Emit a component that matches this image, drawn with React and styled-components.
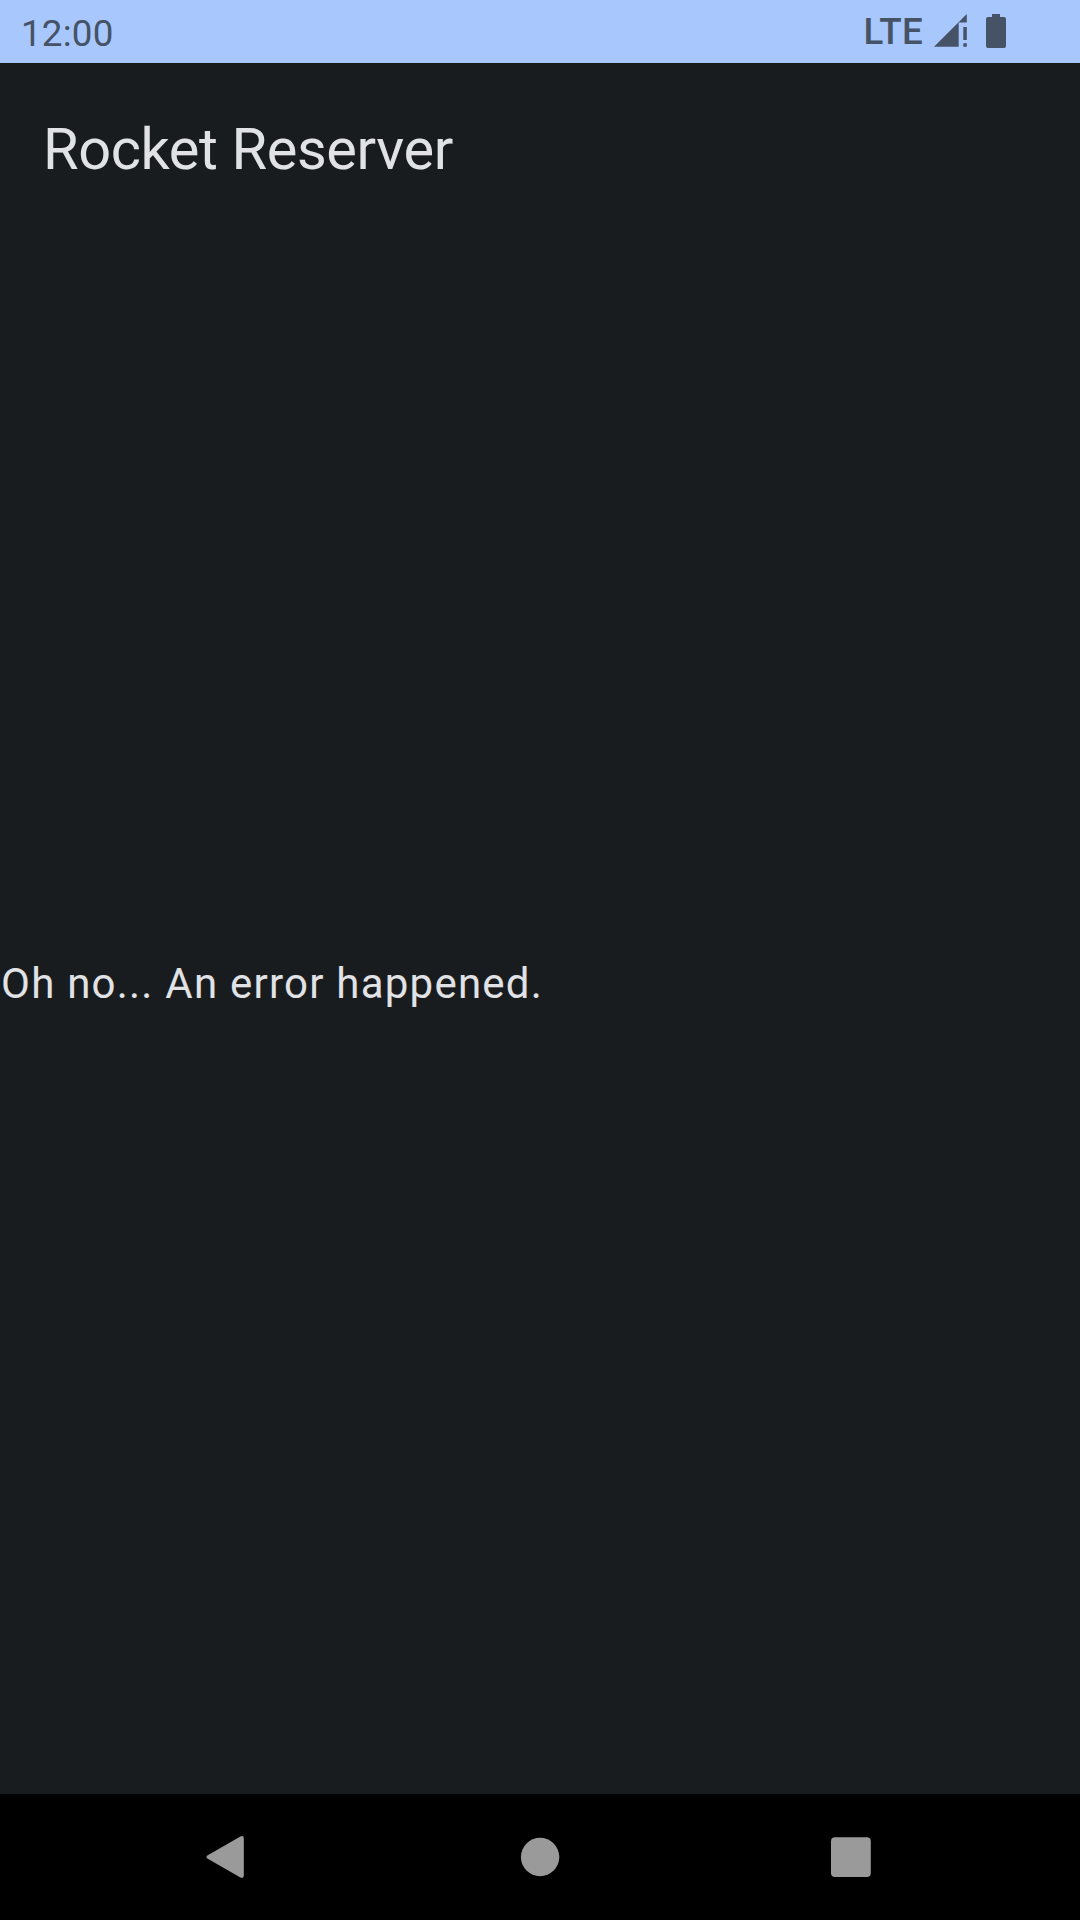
import React from "react";
import styled, { createGlobalStyle } from "styled-components";

const GlobalStyle = createGlobalStyle`
  body {
    margin: 0;
    background: #191c1e;
    font-family: Roboto, "Noto Sans", sans-serif;
  }
`;

const Screen = styled.div`
  display: flex;
  flex-direction: column;
  width: 1080px;
  height: 1920px;
  overflow: hidden;
  background: #191c1e;
  color: #e1e2e5;
`;

const StatusBar = styled.header`
  display: flex;
  align-items: flex-start;
  justify-content: space-between;
  box-sizing: border-box;
  height: 63px;
  flex: none;
  padding: 0 74px 0 21px;
  background: #a8c7fd;
  color: #465367;
`;

const Clock = styled.span`
  padding-top: 12px;
  font-size: 36.75px;
  line-height: 43px;
  letter-spacing: 0.2px;
`;

const StatusIcons = styled.div`
  display: flex;
  align-items: flex-start;
`;

const NetworkType = styled.span`
  margin-right: 11px;
  padding-top: 10px;
  font-size: 36.75px;
  font-weight: 500;
  line-height: 43px;
  letter-spacing: 0.3px;
`;

const StatusGlyph = styled.svg`
  display: block;
  width: ${(p) => p.$width}px;
  height: 36px;
  margin: 14px 0 0 ${(p) => p.$gap || 0}px;
  fill: currentColor;
`;

const TopAppBar = styled.div`
  display: flex;
  align-items: center;
  box-sizing: border-box;
  height: 168px;
  flex: none;
  padding: 4px 43px 0;
`;

const Title = styled.h1`
  margin: 0;
  font-size: 57.75px;
  font-weight: 400;
  line-height: 74px;
  letter-spacing: -0.4px;
`;

const Content = styled.main`
  display: flex;
  flex: 1;
  align-items: center;
  padding: 0 0 59px 1px;
`;

const Message = styled.p`
  margin: 0;
  font-size: 42px;
  line-height: 63px;
  letter-spacing: 1.23px;
`;

const NavigationBar = styled.nav`
  display: flex;
  align-items: center;
  justify-content: center;
  gap: 206px;
  height: 126px;
  flex: none;
  background: #000;
`;

const NavButton = styled.button`
  display: flex;
  width: 105px;
  height: 126px;
  padding: 0;
  border: 0;
  background: none;
  color: #9a9a9a;
`;

const NavGlyph = styled.svg`
  width: 105px;
  height: 126px;
  fill: currentColor;
`;

export default function App() {
  return (
    <Screen>
      <GlobalStyle />
      <StatusBar>
        <Clock>12:00</Clock>
        <StatusIcons>
          <NetworkType>LTE</NetworkType>
          <StatusGlyph $width={33} viewBox="0 0 33 36">
            <path d="M0 32.8 L32.8 0 V8.6 H24.7 V32.8 Z M29.3 13 H32.8 V26 H29.3 Z M29.3 29.3 H32.8 V32.8 H29.3 Z" />
          </StatusGlyph>
          <StatusGlyph $width={20} $gap={19} viewBox="0 0 20 36">
            <path d="M6 0 H14 V3 H18 Q20 3 20 5 V32 Q20 34 18 34 H2 Q0 34 0 32 V5 Q0 3 2 3 H6 Z" />
          </StatusGlyph>
        </StatusIcons>
      </StatusBar>
      <TopAppBar>
        <Title>Rocket Reserver</Title>
      </TopAppBar>
      <Content>
        <Message>Oh no... An error happened.</Message>
      </Content>
      <NavigationBar>
        <NavButton aria-label="Back">
          <NavGlyph viewBox="0 0 105 126">
            <path d="M30.8 61.2 L63.4 42.4 Q66.8 40.8 66.8 44.4 V81.6 Q66.8 85.2 63.4 83.6 L30.8 64.8 Q28 63 30.8 61.2 Z" />
          </NavGlyph>
        </NavButton>
        <NavButton aria-label="Home">
          <NavGlyph viewBox="0 0 105 126">
            <circle cx="52.1" cy="63" r="19.2" />
          </NavGlyph>
        </NavButton>
        <NavButton aria-label="Recent apps">
          <NavGlyph viewBox="0 0 105 126">
            <rect x="32" y="43.2" width="39.8" height="39.8" rx="4" />
          </NavGlyph>
        </NavButton>
      </NavigationBar>
    </Screen>
  );
}
